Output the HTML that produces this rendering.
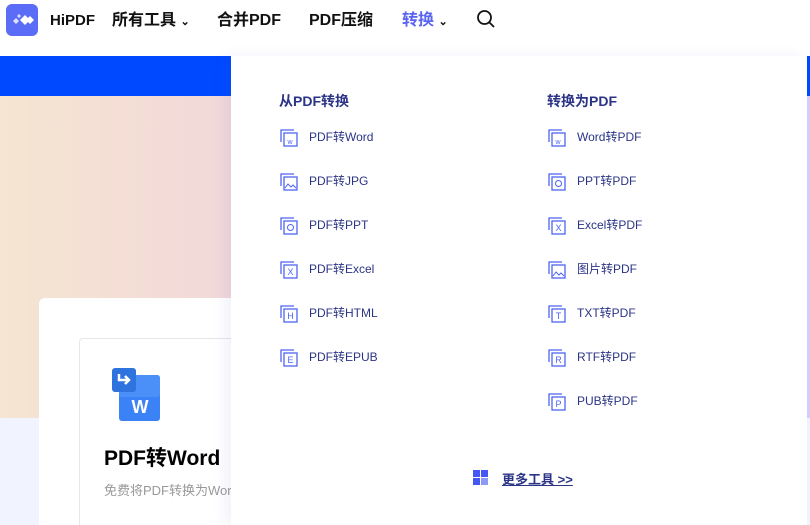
<!DOCTYPE html>
<html><head><meta charset="utf-8"><style>
*{margin:0;padding:0;box-sizing:border-box}
html,body{width:810px;height:525px;overflow:hidden}
body{position:relative;background:#f1f3ff;font-family:"Liberation Sans","Noto Sans CJK SC",sans-serif}
.hdr{position:absolute;left:0;top:0;width:810px;height:56px;background:#fff}
.logo{position:absolute;left:6px;top:4px;width:32px;height:32px;border-radius:6px;background:#5b6cf7}
.nav{position:absolute;top:10px;line-height:22px;height:22px;font-size:16px;font-weight:bold;color:#111;white-space:nowrap}
.blue{position:absolute;left:0;top:56px;width:810px;height:40px;background:#0049ff}
.grad{position:absolute;left:0;top:96px;width:810px;height:322px;background:linear-gradient(90deg,#f5e5d1,#f1d3dd 40%,#d6ccff)}
.card{position:absolute;left:39px;top:298px;width:300px;height:240px;background:#fff;border-radius:6px}
.inner{position:absolute;left:79px;top:338px;width:260px;height:200px;border:1px solid #e6e6ec;border-radius:4px;background:#fff}
.dd{position:absolute;left:231px;top:56px;width:576px;height:469px;background:#fff;box-shadow:-6px 0 12px rgba(80,90,200,.08)}
.h{position:absolute;font-size:14px;font-weight:bold;color:#2b3486;line-height:20px}
.it{position:absolute;font-size:12px;color:#2b3486;white-space:nowrap;line-height:16px}
</style></head><body>
<div class="hdr"></div>
<div class="logo"><svg width="32" height="32" viewBox="0 0 32 32"><path d="M14 16l5-5 5 5-5 5z M20 16l4-4 4 4-4 4z" fill="#fff"/><path d="M7 17l3-3 3 3-3 3z M11 12l2-2 2 2-2 2z" fill="#fff" opacity=".8"/></svg></div>
<div class="nav" style="left:50px;font-size:15px">HiPDF</div>
<div class="nav" style="left:112px">所有工具 <span style="font-size:11px">⌄</span></div>
<div class="nav" style="left:217px;font-weight:600">合并PDF</div>
<div class="nav" style="left:309px;font-weight:600">PDF压缩</div>
<div class="nav" style="left:402px;color:#5a64f0">转换 <span style="font-size:11px;color:#111">⌄</span></div>
<svg style="position:absolute;left:476px;top:9px" width="20" height="20" viewBox="0 0 20 20"><circle cx="8.5" cy="8.5" r="6.5" fill="none" stroke="#111" stroke-width="1.8"/><path d="M13.5 13.5l4.5 4.5" stroke="#111" stroke-width="1.8"/></svg>
<div class="blue"></div>
<div class="grad"></div>
<div class="card"></div>
<div class="inner"></div>
<svg style="position:absolute;left:111px;top:367px" width="50" height="55" viewBox="0 0 50 55"><rect x="8" y="8" width="41" height="46" rx="3" fill="#3b82f6"/><rect x="8" y="8" width="41" height="22" rx="3" fill="#4b8ff8"/><rect x="1" y="1" width="24" height="24" rx="3" fill="#2f73de"/><path d="M8 7v6h10M14 9l4 4-4 4" stroke="#fff" stroke-width="2.5" fill="none"/><text x="29" y="46" font-size="18" font-weight="bold" fill="#fff" text-anchor="middle" font-family="Liberation Sans">W</text></svg>
<div style="position:absolute;left:104px;top:442px;font-size:21px;font-weight:bold;color:#000">PDF转Word</div>
<div style="position:absolute;left:104px;top:480px;font-size:13px;color:#999;white-space:nowrap;width:127px;overflow:hidden">免费将PDF转换为Word</div>
<div class="dd"></div>
<div class="h" style="left:279px;top:91px">从PDF转换</div>
<div class="h" style="left:547px;top:91px">转换为PDF</div>
<div class="it" style="left:309px;top:129px">PDF转Word</div>
<div class="it" style="left:309px;top:173px">PDF转JPG</div>
<div class="it" style="left:309px;top:217px">PDF转PPT</div>
<div class="it" style="left:309px;top:261px">PDF转Excel</div>
<div class="it" style="left:309px;top:305px">PDF转HTML</div>
<div class="it" style="left:309px;top:349px">PDF转EPUB</div>
<div class="it" style="left:577px;top:129px">Word转PDF</div>
<div class="it" style="left:577px;top:173px">PPT转PDF</div>
<div class="it" style="left:577px;top:217px">Excel转PDF</div>
<div class="it" style="left:577px;top:261px">图片转PDF</div>
<div class="it" style="left:577px;top:305px">TXT转PDF</div>
<div class="it" style="left:577px;top:349px">RTF转PDF</div>
<div class="it" style="left:577px;top:393px">PUB转PDF</div>
<svg style="position:absolute;left:0;top:0" width="810" height="525">
<defs><g id="ic"><path d="M1 13V1h13" fill="none" stroke="#4d63f5" stroke-width="1.3"/><rect x="4" y="4" width="13" height="13" fill="#fff" stroke="#4d63f5" stroke-width="1.3"/></g></defs>
<g font-size="9" fill="#4d63f5" font-family="Liberation Sans" text-anchor="middle">
<use href="#ic" x="280" y="129"/><text x="290" y="144" font-size="7">w</text>
<use href="#ic" x="280" y="173"/><path d="M285 188l3-4 3 3 2-2 3 3" stroke="#4d63f5" fill="none"/>
<use href="#ic" x="280" y="217"/><circle cx="290.5" cy="227.5" r="3" fill="none" stroke="#4d63f5"/>
<use href="#ic" x="280" y="261"/><text x="290.5" y="275">X</text>
<use href="#ic" x="280" y="305"/><text x="290.5" y="319">H</text>
<use href="#ic" x="280" y="349"/><text x="290.5" y="363">E</text>
<use href="#ic" x="548" y="129"/><text x="558" y="144" font-size="7">w</text>
<use href="#ic" x="548" y="173"/><circle cx="558.5" cy="183.5" r="3" fill="none" stroke="#4d63f5"/>
<use href="#ic" x="548" y="217"/><text x="558.5" y="231">X</text>
<use href="#ic" x="548" y="261"/><path d="M553 276l3-4 3 3 2-2 3 3" stroke="#4d63f5" fill="none"/>
<use href="#ic" x="548" y="305"/><text x="558.5" y="319">T</text>
<use href="#ic" x="548" y="349"/><text x="558.5" y="363">R</text>
<use href="#ic" x="548" y="393"/><text x="558.5" y="407">P</text>
</g>
<rect x="473" y="470" width="7" height="7" fill="#4457f5"/><rect x="481" y="470" width="7" height="7" fill="#4457f5"/><rect x="473" y="478" width="7" height="7" fill="#4457f5"/><rect x="481" y="478" width="7" height="7" fill="#8d9af8"/>
</svg>
<div style="position:absolute;left:502px;top:469px;font-size:13px;font-weight:bold;color:#2b3486;text-decoration:underline">更多工具 &gt;&gt;</div>
</body></html>
